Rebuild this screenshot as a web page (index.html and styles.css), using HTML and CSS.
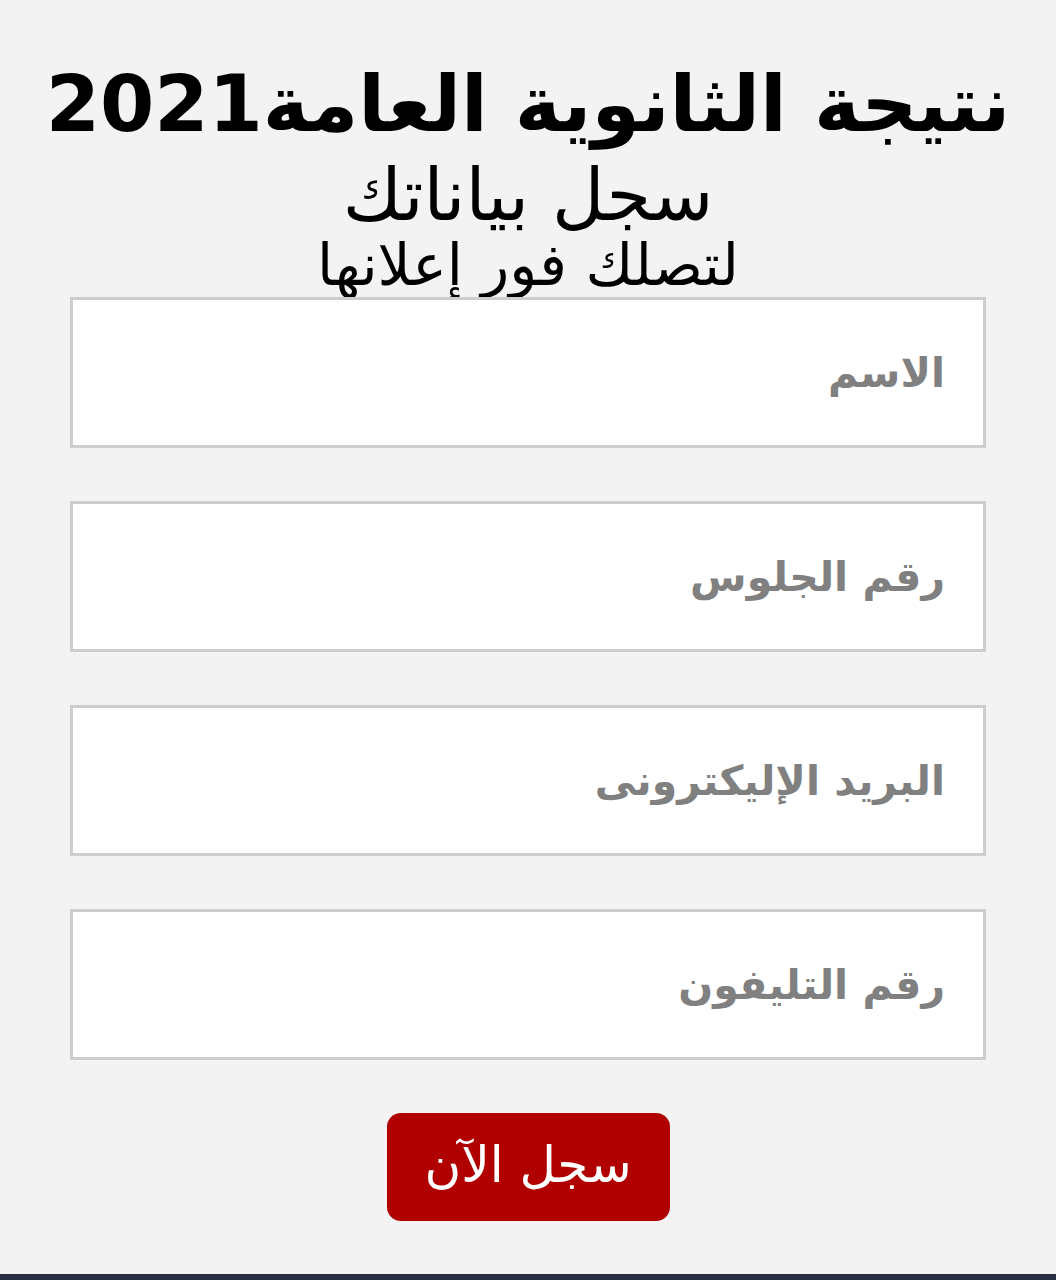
FILE: index.html
```html
<!DOCTYPE html>
<html lang="ar" dir="rtl">
<head>
<meta charset="utf-8">
<title>نتيجة الثانوية العامة 2021</title>
<link rel="stylesheet" href="styles.css">
</head>
<body>
<main class="page">
  <header class="head">
    <h1 class="title">نتيجة الثانوية العامة2021</h1>
    <p class="sub">سجل بياناتك</p>
    <p class="sub2">لتصلك فور إعلانها</p>
  </header>
  <form class="form">
    <input class="field" type="text" placeholder="الاسم">
    <input class="field" type="text" placeholder="رقم الجلوس">
    <input class="field" type="text" placeholder="البريد الإليكترونى">
    <input class="field" type="text" placeholder="رقم التليفون">
    <button class="btn" type="button">سجل الآن</button>
  </form>
</main>
<div class="bar"></div>
</body>
</html>
```
FILE: styles.css
```css
html, body {
  margin: 0;
  padding: 0;
}
body {
  background: #f3f3f3;
  font-family: "DejaVu Sans", "Noto Sans", sans-serif;
  width: 1056px;
  height: 1280px;
  display: flex;
  flex-direction: column;
  overflow: hidden;
}
.page {
  flex: 1;
  display: flex;
  flex-direction: column;
  align-items: center;
  padding-top: 52px;
}
.head {
  display: flex;
  flex-direction: column;
  align-items: center;
  color: #000;
}
.title {
  margin: 0;
  font-size: 78px;
  font-weight: bold;
  line-height: 104px;
  white-space: nowrap;
}
.sub {
  margin: 0;
  font-size: 72px;
  line-height: 78px;
  white-space: nowrap;
}
.sub2 {
  margin: 0;
  font-size: 58px;
  line-height: 62px;
  white-space: nowrap;
}
.form {
  width: 916px;
  display: flex;
  flex-direction: column;
  align-items: center;
  gap: 53px;
  margin-top: 1px;
}
.field {
  box-sizing: border-box;
  width: 916px;
  height: 151px;
  border: 3px solid #cdcdcd;
  background: #fff;
  padding: 0 38px;
  font-family: inherit;
  font-size: 41px;
  font-weight: bold;
  color: #333;
  direction: rtl;
  outline: none;
}
.field::placeholder {
  color: #808080;
}
.btn {
  width: 283px;
  height: 108px;
  background: #b00000;
  color: #fff;
  border: none;
  border-radius: 14px;
  font-family: inherit;
  font-size: 50px;
  padding: 0 0 4px;
}
.bar {
  height: 6px;
  background: #283142;
}
```
